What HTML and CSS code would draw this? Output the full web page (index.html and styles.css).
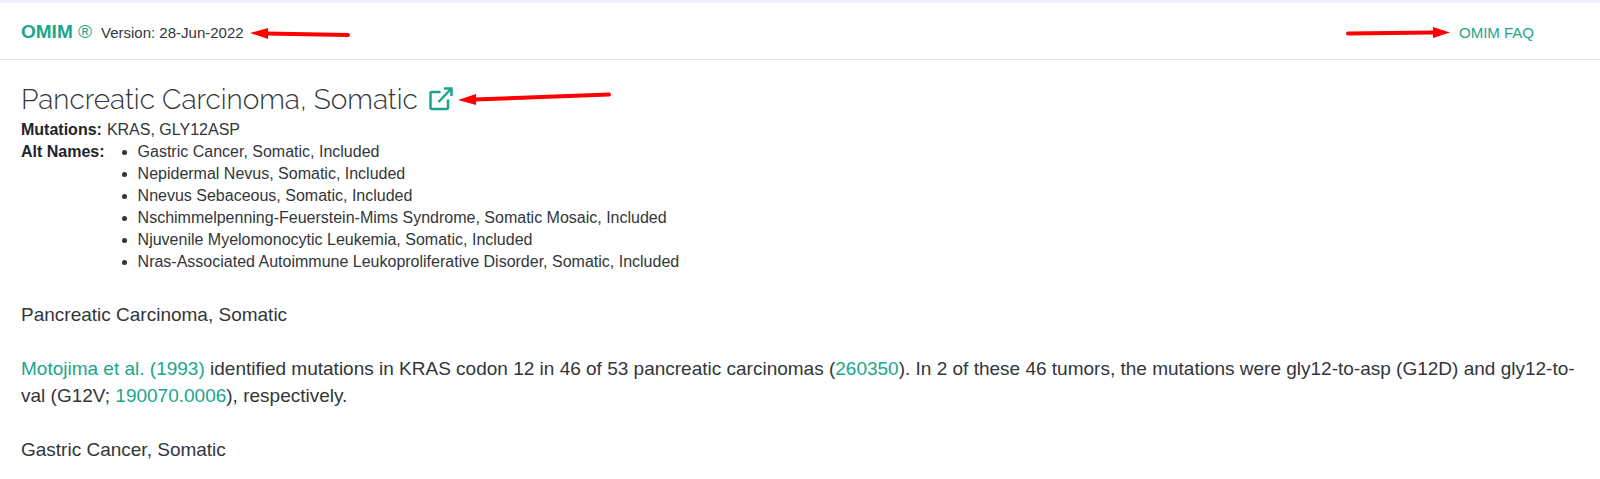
FILE: index.html
```html
<!DOCTYPE html>
<html lang="en">
<head>
  <meta charset="UTF-8" />
  <meta name="viewport" content="width=device-width, initial-scale=1.0"/>
  <title>OMIM - Pancreatic Carcinoma, Somatic</title>
  <link rel="stylesheet" href="styles.css">
</head>
<body>
  <header class="top-bar">
    <a class="brand" href="#">OMIM <span class="mark">®</span></a>
    <span class="version">Version: 28-Jun-2022</span>
    <svg class="arrow" width="102" height="14" viewBox="0 0 102 14" aria-hidden="true">
      <path d="M16 7.500L98 9" />
      <polygon points="0,7 18,2 18,13" />
    </svg>
    <svg class="arrow arrow-faq" width="105" height="14" viewBox="0 0 105 14" aria-hidden="true">
      <path d="M3 7.500L88 6.500" />
      <polygon points="105,6.500 88,1 88,12" />
    </svg>
    <a class="faq" href="#">OMIM FAQ</a>
  </header>

  <main class="entry">
    <div class="title-row">
      <h1>Pancreatic Carcinoma, Somatic</h1>
      <a class="external" href="#" aria-label="Open entry">
        <svg width="24" height="24" viewBox="0 0 24 24">
          <path d="M11.500 5H3Q1.500 5 1.500 6.500V20.500Q1.500 22 3 22H17.500Q19 22 19 20.500V12.500" />
          <path d="M15 1.500H22.500V9M22.500 1.500L9.500 15" />
        </svg>
      </a>
      <svg class="arrow" width="154" height="18" viewBox="0 0 154 18" aria-hidden="true">
        <path d="M16 9.500L151 4.500" />
        <polygon points="0,10 18,4 18,15" />
      </svg>
    </div>

    <dl class="facts">
      <div class="fact">
        <dt>Mutations:</dt>
        <dd>KRAS, GLY12ASP</dd>
      </div>
      <div class="fact">
        <dt>Alt Names:</dt>
        <dd>
          <ul>
            <li>Gastric Cancer, Somatic, Included</li>
            <li>Nepidermal Nevus, Somatic, Included</li>
            <li>Nnevus Sebaceous, Somatic, Included</li>
            <li>Nschimmelpenning-Feuerstein-Mims Syndrome, Somatic Mosaic, Included</li>
            <li>Njuvenile Myelomonocytic Leukemia, Somatic, Included</li>
            <li>Nras-Associated Autoimmune Leukoproliferative Disorder, Somatic, Included</li>
          </ul>
        </dd>
      </div>
    </dl>

    <div class="text">
      <p>Pancreatic Carcinoma, Somatic</p>
      <p><a href="#">Motojima et al. (1993)</a> identified mutations in KRAS codon 12 in 46 of 53 pancreatic carcinomas (<a href="#">260350</a>). In 2 of these 46 tumors, the mutations were gly12-to-asp (G12D) and gly12-to-val (G12V; <a href="#">190070.0006</a>), respectively.</p>
      <p>Gastric Cancer, Somatic</p>
    </div>
  </main>
</body>
</html>
```

FILE: styles.css
```css
body {
  margin: 0;
  border-top: 3px solid #f0f4f8;
  background: #fff;
  color: #32363a;
  font-family: "Liberation Sans", Arial, sans-serif;
  font-size: 16px;
}
a {
  color: #1aa68c;
  text-decoration: none;
}
.top-bar {
  display: flex;
  align-items: center;
  box-sizing: border-box;
  height: 57px;
  padding: 3px 66px 0 21px;
  border-bottom: 1px solid #e4e6e8;
}
.brand {
  padding-bottom: 2px;
  font-size: 19px;
  font-weight: bold;
}
.mark {
  font-weight: normal;
}
.version,
.faq {
  font-size: 15px;
}
.version {
  margin: 0 6px 0 9px;
}
.arrow {
  flex: none;
  fill: #f00;
}
.arrow path {
  stroke: #f00;
  stroke-width: 4;
  stroke-linecap: round;
}
.arrow-faq {
  margin-left: auto;
  margin-right: 9px;
}
.entry {
  padding: 19px 20px 0 21px;
}
.title-row {
  display: flex;
  align-items: center;
  height: 40px;
}
h1 {
  margin: 0;
  font-family: Raleway, Lato, sans-serif;
  font-size: 28px;
  font-weight: 300;
}
.external {
  display: flex;
  margin: 0 5px 0 11px;
}
.external svg {
  fill: none;
  stroke: #1aa68c;
  stroke-width: 2.5;
}
.facts {
  margin: 0;
  line-height: 22px;
}
.fact {
  display: flex;
}
dt {
  color: #212529;
  font-weight: bold;
}
dd {
  margin: 0 0 0 5px;
}
ul {
  margin: 0;
  padding-left: 28px;
}
.text {
  margin-top: 28px;
  font-size: 19px;
  line-height: 27px;
}
.text p {
  margin: 0 0 27px;
}
.text p:last-child {
  margin-bottom: 0;
}
```
